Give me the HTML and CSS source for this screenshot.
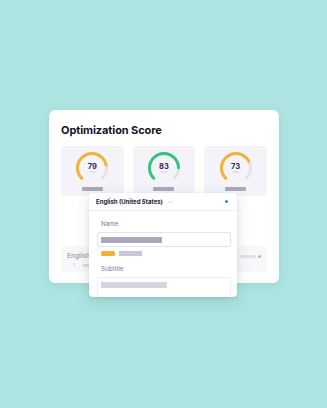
FILE: index.html
```html
<!DOCTYPE html>
<html>
<head>
<meta charset="utf-8">
<link rel="stylesheet" href="styles.css">
</head>
<body>
<div class="stage">
  <div class="card">
    <h1 class="title">Optimization Score</h1>
    <div class="tiles">
      <div class="tile">
        <div class="gauge">
          <svg viewBox="0 0 34 34" width="34" height="34">
            <circle class="track" cx="17" cy="17" r="14.5" pathLength="100" stroke-dasharray="75 100" transform="rotate(135 17 17)"/>
            <circle class="val orange" cx="17" cy="17" r="14.5" pathLength="100" stroke-dasharray="59.2 100" transform="rotate(135 17 17)"/>
          </svg>
          <div class="num"><span class="n">79</span><span class="lbl">Good</span></div>
        </div>
        <div class="bar"></div>
      </div>
      <div class="tile">
        <div class="gauge">
          <svg viewBox="0 0 34 34" width="34" height="34">
            <circle class="track" cx="17" cy="17" r="14.5" pathLength="100" stroke-dasharray="75 100" transform="rotate(135 17 17)"/>
            <circle class="val green" cx="17" cy="17" r="14.5" pathLength="100" stroke-dasharray="62.2 100" transform="rotate(135 17 17)"/>
          </svg>
          <div class="num"><span class="n">83</span><span class="lbl">Good</span></div>
        </div>
        <div class="bar"></div>
      </div>
      <div class="tile">
        <div class="gauge">
          <svg viewBox="0 0 34 34" width="34" height="34">
            <circle class="track" cx="17" cy="17" r="14.5" pathLength="100" stroke-dasharray="75 100" transform="rotate(135 17 17)"/>
            <circle class="val orange" cx="17" cy="17" r="14.5" pathLength="100" stroke-dasharray="54.7 100" transform="rotate(135 17 17)"/>
          </svg>
          <div class="num"><span class="n">73</span><span class="lbl">Good</span></div>
        </div>
        <div class="bar"></div>
      </div>
    </div>
    <div class="langbox">
      <div class="langrow">
        <span class="lang">English</span>
        <span class="rgt"><span class="rbar"></span><span class="rdot"></span></span>
      </div>
      <div class="langrow2"><span class="idx">1</span><span class="pbar"></span></div>
    </div>
  </div>

  <div class="popup">
    <div class="phead">
      <span class="ptitle">English (United States)</span>
      <svg class="chev" viewBox="0 0 6 4" width="5" height="4"><path d="M1 1 L3 3 L5 1" fill="none" stroke="#b8b6c6" stroke-width="0.8" stroke-linecap="round"/></svg>
      <span class="pdot"></span>
    </div>
    <div class="pbody">
      <div class="flabel">Name</div>
      <div class="field"><span class="fbar"></span></div>
      <div class="tags"><span class="tag-o"></span><span class="tag-g"></span></div>
      <div class="flabel sub">Subtitle</div>
      <div class="field tall"><span class="fbar light"></span></div>
    </div>
  </div>
</div>
</body>
</html>
```
FILE: styles.css
```css
html, body {
  margin: 0;
  padding: 0;
}
body {
  width: 327px;
  height: 408px;
  background: #ade4e2;
  font-family: "Inter", "Noto Sans", sans-serif;
  overflow: hidden;
}
.stage {
  position: relative;
  padding: 110px 0 0 49px;
}
.card {
  box-sizing: border-box;
  width: 230px;
  height: 173px;
  background: #fff;
  border-radius: 6px;
  padding: 13px 12px 0 12px;
  box-shadow: 0 2px 8px rgba(40, 90, 90, 0.10);
}
.title {
  margin: 0 0 9px 0;
  font-size: 11px;
  line-height: 14px;
  font-weight: 700;
  color: #16131f;
  letter-spacing: -0.1px;
}
.tiles {
  display: grid;
  grid-template-columns: repeat(3, 1fr);
  gap: 9px;
}
.tile {
  height: 50px;
  background: #f4f4f8;
  border-radius: 4px;
  display: flex;
  flex-direction: column;
  align-items: center;
  padding-top: 5px;
  box-sizing: border-box;
}
.gauge {
  position: relative;
  width: 34px;
  height: 34px;
}
.gauge svg {
  display: block;
}
.track, .val {
  fill: none;
  stroke-width: 3;
  stroke-linecap: round;
}
.track { stroke: #e2e2e9; }
.orange { stroke: #f6b232; }
.green { stroke: #33c47c; }
.num {
  position: absolute;
  inset: 0;
  display: flex;
  flex-direction: column;
  align-items: center;
  justify-content: center;
}
.n {
  font-size: 7.5px;
  line-height: 8px;
  font-weight: 700;
  color: #352a58;
  margin-top: 1px;
}
.lbl {
  font-size: 2.5px;
  line-height: 3px;
  color: #c9c7d4;
}
.bar {
  margin-top: 2px;
  width: 21px;
  height: 3.5px;
  border-radius: 1px;
  background: #aaa8bb;
}
.langbox {
  margin-top: 50px;
  height: 26px;
  background: #f8f8fb;
  border-radius: 3px;
  padding: 6px 6px 0 6px;
  box-sizing: border-box;
}
.langrow {
  display: flex;
  justify-content: space-between;
  align-items: center;
  height: 8px;
}
.lang {
  font-size: 6.5px;
  font-weight: 600;
  color: #a5a3b3;
}
.rgt {
  display: flex;
  align-items: center;
  gap: 2px;
}
.rbar {
  width: 16px;
  height: 3px;
  background: #e1e0e8;
  border-radius: 1px;
}
.rdot {
  width: 3px;
  height: 3px;
  border-radius: 50%;
  background: #8fc4d2;
}
.langrow2 {
  display: flex;
  align-items: center;
  gap: 8px;
  padding-left: 6px;
  margin-top: 2px;
}
.idx {
  font-size: 5px;
  color: #b9b7c4;
}
.pbar {
  width: 10px;
  height: 3px;
  background: #f4d0d4;
}
.popup {
  position: absolute;
  left: 89px;
  top: 193px;
  width: 148px;
  height: 104px;
  background: #fff;
  border-radius: 4px;
  box-shadow: 0 4px 14px rgba(30, 60, 70, 0.16), 0 1px 3px rgba(30, 60, 70, 0.08);
  overflow: hidden;
}
.phead {
  height: 18px;
  border-bottom: 1px solid #ececf1;
  display: flex;
  align-items: center;
  padding: 0 7px;
  box-sizing: border-box;
}
.ptitle {
  font-size: 6px;
  font-weight: 700;
  color: #27223a;
}
.chev {
  margin-left: 5px;
}
.pdot {
  margin-left: auto;
  width: 3.5px;
  height: 3.5px;
  border-radius: 50%;
  background: #2b9a8c;
  margin-right: 2px;
}
.pbody {
  padding: 9px 6px 0 8px;
}
.flabel {
  font-size: 6.3px;
  line-height: 8px;
  color: #7c778f;
  padding-left: 4px;
  margin-bottom: 4px;
}
.flabel.sub {
  margin-top: 9px;
}
.field {
  box-sizing: border-box;
  height: 15px;
  border: 1px solid #e4e3ea;
  border-radius: 2px;
  display: flex;
  align-items: center;
  padding-left: 3px;
}
.field.tall {
  height: 30px;
  align-items: flex-start;
  padding-top: 4px;
  border-color: #efeef3;
}
.fbar {
  width: 61px;
  height: 6px;
  background: #aba8bd;
}
.fbar.light {
  width: 66px;
  background: #d5d3df;
}
.tags {
  display: flex;
  gap: 4px;
  margin-top: 4px;
  padding-left: 4px;
}
.tag-o {
  width: 14px;
  height: 5px;
  border-radius: 1.5px;
  background: #f5b335;
}
.tag-g {
  width: 23px;
  height: 5px;
  background: #c9c7d5;
}
```
